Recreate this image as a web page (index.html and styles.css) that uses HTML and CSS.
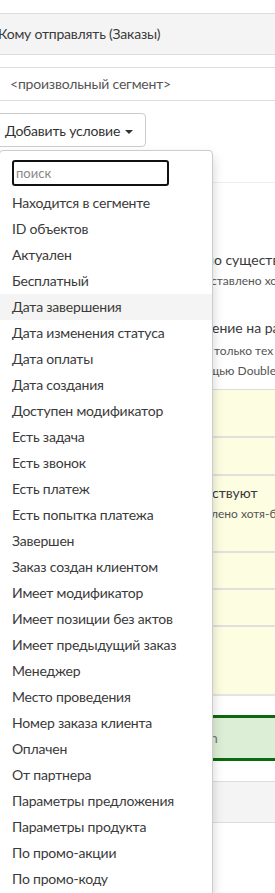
FILE: index.html
```html
<!DOCTYPE html>
<html lang="ru">
<head>
    <meta charset="UTF-8">
    <meta name="viewport" content="width=device-width, initial-scale=1.0">
    <link rel="stylesheet" href="styles.css">
    <title>Сегмент</title>
</head>
<body>
    <div class="page">
        <div class="panel-head">Кому отправлять (Заказы)</div>

        <div class="segment">&lt;произвольный сегмент&gt;</div>

        <div class="toolbar">
            <button class="btn">Добавить условие <span class="caret"></span></button>
        </div>

        <div class="conditions">
            <div class="cond cond-first">
                <div class="cond-title"><span class="lead lead-194">Объекты, которые реально и</span>но существуют</div>
                <div class="cond-desc"><span class="lead lead-199">Условие будет выполнено, если вы</span>ставлено хотя-бы один счёт</div>
            </div>
            <div class="cond cond-second">
                <div class="cond-title"><span class="lead lead-200">Сработает только огранич</span>ение на рассылку</div>
                <div class="cond-desc"><span class="lead lead-202">Письма будут отправлены для</span>только тех клиентов,</div>
                <div class="cond-desc"><span class="lead lead-197">кто подтвердил подписку с помо</span>щью Double Opt-In</div>
            </div>

            <div class="grid">
                <div class="grid-row r1"></div>
                <div class="grid-row r2"></div>
                <div class="grid-row r3">
                    <div class="cond-title"><span class="lead lead-200">Значения поля не отсут</span>ствуют</div>
                    <div class="cond-desc"><span class="lead lead-199">Условие будет выполнено, если выстав</span>лено хотя-бы одно</div>
                </div>
                <div class="grid-row r4"></div>
                <div class="grid-row r5"></div>
                <div class="grid-row r6"></div>
            </div>

            <div class="result"><span class="lead lead-198">Будет отправлено по Double Opt-I</span>n</div>

            <div class="footer-bar"></div>
        </div>

        <div class="dropdown">
            <div class="search-wrap">
                <input class="search" type="text" placeholder="поиск">
            </div>
            <ul class="menu">
                <li>Находится в сегменте</li>
                <li>ID объектов</li>
                <li>Актуален</li>
                <li>Бесплатный</li>
                <li class="active">Дата завершения</li>
                <li>Дата изменения статуса</li>
                <li>Дата оплаты</li>
                <li>Дата создания</li>
                <li>Доступен модификатор</li>
                <li>Есть задача</li>
                <li>Есть звонок</li>
                <li>Есть платеж</li>
                <li>Есть попытка платежа</li>
                <li>Завершен</li>
                <li>Заказ создан клиентом</li>
                <li>Имеет модификатор</li>
                <li>Имеет позиции без актов</li>
                <li>Имеет предыдущий заказ</li>
                <li>Менеджер</li>
                <li>Место проведения</li>
                <li>Номер заказа клиента</li>
                <li>Оплачен</li>
                <li>От партнера</li>
                <li>Параметры предложения</li>
                <li>Параметры продукта</li>
                <li>По промо-акции</li>
                <li>По промо-коду</li>
                <li>По реферальной ссылке</li>
            </ul>
        </div>
    </div>
</body>
</html>
```

FILE: styles.css
```css
html {
    overflow: hidden;
}

body {
    margin: 0;
    background-color: #fff;
    color: #3a3a3a;
    font-family: Lato, "Open Sans", sans-serif;
    font-size: 14px;
}

.page {
    position: relative;
    padding-top: 13px;
    min-height: 880px;
}

.panel-head {
    height: 40px;
    line-height: 40px;
    background-color: #f4f4f4;
    border-top: 1px solid #ddd;
    border-bottom: 1px solid #ddd;
    text-indent: -2px;
    letter-spacing: -0.2px;
    white-space: nowrap;
}

.segment {
    margin-top: 12px;
    height: 32px;
    line-height: 32px;
    border-top: 1px solid #ddd;
    border-bottom: 1px solid #ddd;
    padding-left: 10px;
    font-size: 14px;
    letter-spacing: -0.2px;
    color: #555;
}

.toolbar {
    padding-top: 12px;
}

.btn {
    margin-left: -1px;
    height: 34px;
    padding: 0 12px 0 5px;
    background-color: #fff;
    border: 1px solid #ccc;
    border-radius: 0 4px 4px 0;
    font-family: inherit;
    font-size: 14px;
    letter-spacing: -0.2px;
    color: #333;
}

.caret {
    display: inline-block;
    width: 0;
    height: 0;
    margin-left: 2px;
    vertical-align: middle;
    border-top: 4px solid #333;
    border-left: 4px solid transparent;
    border-right: 4px solid transparent;
}

.conditions {
    margin-top: 35px;
    border-top: 1px solid #eee;
}

.cond {
    white-space: nowrap;
    padding-left: 12px;
}

.cond-first {
    padding-top: 66px;
    height: 68px;
}

.cond-second {
    height: 72px;
}

.cond-second .cond-title {
    height: 24px;
}

.cond-title {
    height: 22px;
    line-height: 22px;
}

.cond-desc {
    height: 20px;
    line-height: 20px;
    font-size: 12px;
    color: #555;
}

/* the start of these lines sits under the open menu */
.lead {
    display: inline-block;
    overflow: hidden;
    vertical-align: top;
    color: transparent;
}

.lead-194 { width: 194px; }
.lead-197 { width: 197px; }
.lead-198 { width: 198px; }
.lead-199 { width: 199px; }
.lead-200 { width: 200px; }
.lead-202 { width: 202px; }

.grid {
    background-color: #fdfde1;
    border-top: 1px solid #ddd;
    border-bottom: 2px solid #e4e4e4;
}

.grid-row {
    border-bottom: 2px solid #e0e0dc;
    white-space: nowrap;
    padding-left: 12px;
}

.grid-row:last-child {
    border-bottom: none;
}

.r1 { height: 46px; }
.r2 { height: 36px; }
.r3 { height: 69px; padding-top: 6px; }
.r4 { height: 35px; }
.r5 { height: 35px; }
.r6 { height: 67px; }

.result {
    margin-top: 19px;
    height: 40px;
    line-height: 40px;
    background-color: #ddeed6;
    border-top: 3px solid #0b6a0b;
    border-bottom: 3px solid #0b6a0b;
    padding-left: 12px;
    white-space: nowrap;
    color: #777;
}

.footer-bar {
    margin-top: 20px;
    height: 40px;
    background-color: #f4f4f4;
    border-top: 1px solid #ddd;
    border-bottom: 1px solid #ddd;
}

.dropdown {
    position: absolute;
    top: 150px;
    left: -1px;
    width: 212px;
    background-color: #fff;
    border: 1px solid #ccc;
    border-radius: 4px;
    box-shadow: 0 6px 12px rgba(0, 0, 0, 0.175);
    padding-top: 9px;
}

.search-wrap {
    padding-left: 12px;
    padding-bottom: 4px;
}

.search {
    box-sizing: border-box;
    width: 157px;
    height: 26px;
    border: 2px solid #111;
    border-radius: 3px;
    padding: 0 2px;
    font-family: inherit;
    font-size: 13px;
    color: #333;
    outline: none;
}

.search::placeholder {
    color: #888;
}

.menu {
    list-style: none;
    margin: 0;
    padding: 0;
}

.menu li {
    height: 26px;
    line-height: 26px;
    padding-left: 12px;
    letter-spacing: -0.2px;
    white-space: nowrap;
}

.menu li.active {
    background-color: #f4f4f4;
}
```
